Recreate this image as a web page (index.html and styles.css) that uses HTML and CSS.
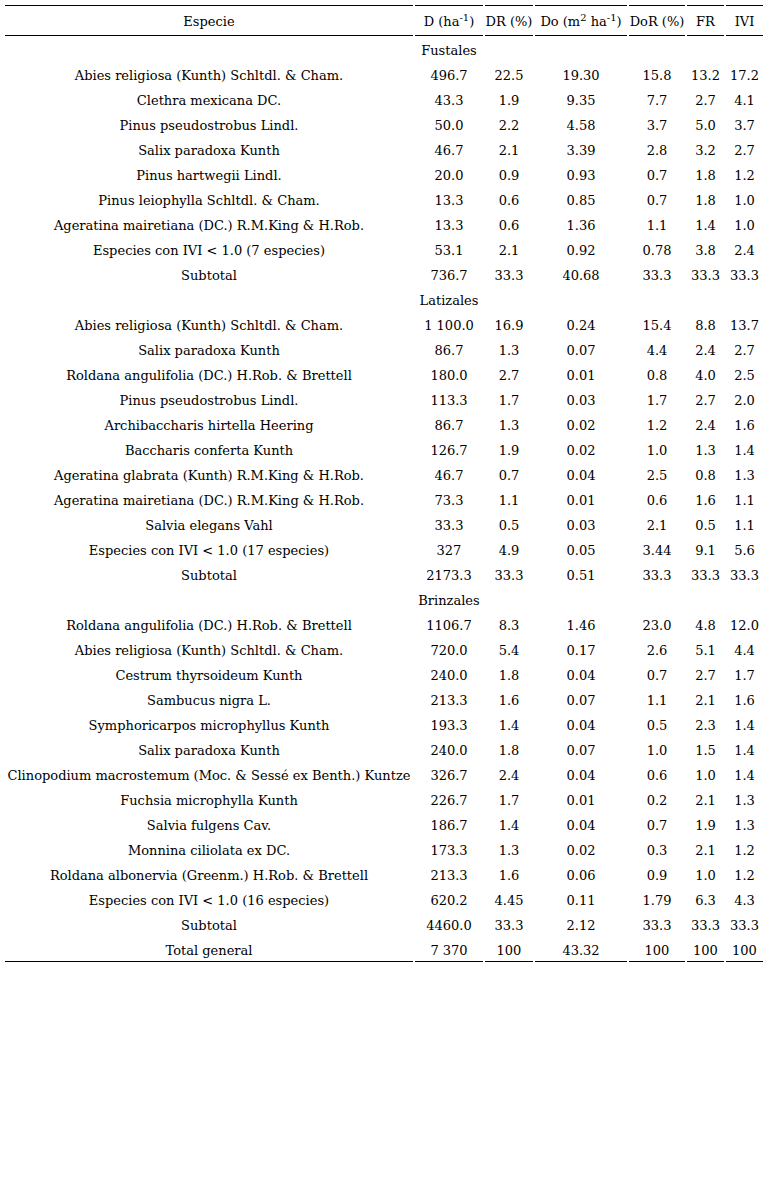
FILE: index.html
```html
<!DOCTYPE html>
<html lang="es">
<head>
<meta charset="utf-8">
<title>Tabla</title>
<link rel="stylesheet" href="styles.css">
</head>
<body>
<table class="tbl">
<colgroup>
<col class="c-sp"><col class="c-d"><col class="c-dr"><col class="c-do"><col class="c-dor"><col class="c-fr"><col class="c-ivi">
</colgroup>
<thead>
<tr class="head">
<th>Especie</th>
<th>D (ha<sup>-1</sup>)</th>
<th>DR (%)</th>
<th>Do (m<sup>2</sup> ha<sup>-1</sup>)</th>
<th>DoR (%)</th>
<th>FR</th>
<th>IVI</th>
</tr>
</thead>
<tbody>
<tr><td></td><td class="grp">Fustales</td><td></td><td></td><td></td><td></td><td></td></tr>
<tr><td>Abies religiosa (Kunth) Schltdl. &amp; Cham.</td><td>496.7</td><td>22.5</td><td>19.30</td><td>15.8</td><td>13.2</td><td>17.2</td></tr>
<tr><td>Clethra mexicana DC.</td><td>43.3</td><td>1.9</td><td>9.35</td><td>7.7</td><td>2.7</td><td>4.1</td></tr>
<tr><td>Pinus pseudostrobus Lindl.</td><td>50.0</td><td>2.2</td><td>4.58</td><td>3.7</td><td>5.0</td><td>3.7</td></tr>
<tr><td>Salix paradoxa Kunth</td><td>46.7</td><td>2.1</td><td>3.39</td><td>2.8</td><td>3.2</td><td>2.7</td></tr>
<tr><td>Pinus hartwegii Lindl.</td><td>20.0</td><td>0.9</td><td>0.93</td><td>0.7</td><td>1.8</td><td>1.2</td></tr>
<tr><td>Pinus leiophylla Schltdl. &amp; Cham.</td><td>13.3</td><td>0.6</td><td>0.85</td><td>0.7</td><td>1.8</td><td>1.0</td></tr>
<tr><td>Ageratina mairetiana (DC.) R.M.King &amp; H.Rob.</td><td>13.3</td><td>0.6</td><td>1.36</td><td>1.1</td><td>1.4</td><td>1.0</td></tr>
<tr><td>Especies con IVI &lt; 1.0 (7 especies)</td><td>53.1</td><td>2.1</td><td>0.92</td><td>0.78</td><td>3.8</td><td>2.4</td></tr>
<tr><td>Subtotal</td><td>736.7</td><td>33.3</td><td>40.68</td><td>33.3</td><td>33.3</td><td>33.3</td></tr>
<tr><td></td><td class="grp">Latizales</td><td></td><td></td><td></td><td></td><td></td></tr>
<tr><td>Abies religiosa (Kunth) Schltdl. &amp; Cham.</td><td>1 100.0</td><td>16.9</td><td>0.24</td><td>15.4</td><td>8.8</td><td>13.7</td></tr>
<tr><td>Salix paradoxa Kunth</td><td>86.7</td><td>1.3</td><td>0.07</td><td>4.4</td><td>2.4</td><td>2.7</td></tr>
<tr><td>Roldana angulifolia (DC.) H.Rob. &amp; Brettell</td><td>180.0</td><td>2.7</td><td>0.01</td><td>0.8</td><td>4.0</td><td>2.5</td></tr>
<tr><td>Pinus pseudostrobus Lindl.</td><td>113.3</td><td>1.7</td><td>0.03</td><td>1.7</td><td>2.7</td><td>2.0</td></tr>
<tr><td>Archibaccharis hirtella Heering</td><td>86.7</td><td>1.3</td><td>0.02</td><td>1.2</td><td>2.4</td><td>1.6</td></tr>
<tr><td>Baccharis conferta Kunth</td><td>126.7</td><td>1.9</td><td>0.02</td><td>1.0</td><td>1.3</td><td>1.4</td></tr>
<tr><td>Ageratina glabrata (Kunth) R.M.King &amp; H.Rob.</td><td>46.7</td><td>0.7</td><td>0.04</td><td>2.5</td><td>0.8</td><td>1.3</td></tr>
<tr><td>Ageratina mairetiana (DC.) R.M.King &amp; H.Rob.</td><td>73.3</td><td>1.1</td><td>0.01</td><td>0.6</td><td>1.6</td><td>1.1</td></tr>
<tr><td>Salvia elegans Vahl</td><td>33.3</td><td>0.5</td><td>0.03</td><td>2.1</td><td>0.5</td><td>1.1</td></tr>
<tr><td>Especies con IVI &lt; 1.0 (17 especies)</td><td>327</td><td>4.9</td><td>0.05</td><td>3.44</td><td>9.1</td><td>5.6</td></tr>
<tr><td>Subtotal</td><td>2173.3</td><td>33.3</td><td>0.51</td><td>33.3</td><td>33.3</td><td>33.3</td></tr>
<tr><td></td><td class="grp">Brinzales</td><td></td><td></td><td></td><td></td><td></td></tr>
<tr><td>Roldana angulifolia (DC.) H.Rob. &amp; Brettell</td><td>1106.7</td><td>8.3</td><td>1.46</td><td>23.0</td><td>4.8</td><td>12.0</td></tr>
<tr><td>Abies religiosa (Kunth) Schltdl. &amp; Cham.</td><td>720.0</td><td>5.4</td><td>0.17</td><td>2.6</td><td>5.1</td><td>4.4</td></tr>
<tr><td>Cestrum thyrsoideum Kunth</td><td>240.0</td><td>1.8</td><td>0.04</td><td>0.7</td><td>2.7</td><td>1.7</td></tr>
<tr><td>Sambucus nigra L.</td><td>213.3</td><td>1.6</td><td>0.07</td><td>1.1</td><td>2.1</td><td>1.6</td></tr>
<tr><td>Symphoricarpos microphyllus Kunth</td><td>193.3</td><td>1.4</td><td>0.04</td><td>0.5</td><td>2.3</td><td>1.4</td></tr>
<tr><td>Salix paradoxa Kunth</td><td>240.0</td><td>1.8</td><td>0.07</td><td>1.0</td><td>1.5</td><td>1.4</td></tr>
<tr><td>Clinopodium macrostemum (Moc. &amp; Sessé ex Benth.) Kuntze</td><td>326.7</td><td>2.4</td><td>0.04</td><td>0.6</td><td>1.0</td><td>1.4</td></tr>
<tr><td>Fuchsia microphylla Kunth</td><td>226.7</td><td>1.7</td><td>0.01</td><td>0.2</td><td>2.1</td><td>1.3</td></tr>
<tr><td>Salvia fulgens Cav.</td><td>186.7</td><td>1.4</td><td>0.04</td><td>0.7</td><td>1.9</td><td>1.3</td></tr>
<tr><td>Monnina ciliolata ex DC.</td><td>173.3</td><td>1.3</td><td>0.02</td><td>0.3</td><td>2.1</td><td>1.2</td></tr>
<tr><td>Roldana albonervia (Greenm.) H.Rob. &amp; Brettell</td><td>213.3</td><td>1.6</td><td>0.06</td><td>0.9</td><td>1.0</td><td>1.2</td></tr>
<tr><td>Especies con IVI &lt; 1.0 (16 especies)</td><td>620.2</td><td>4.45</td><td>0.11</td><td>1.79</td><td>6.3</td><td>4.3</td></tr>
<tr><td>Subtotal</td><td>4460.0</td><td>33.3</td><td>2.12</td><td>33.3</td><td>33.3</td><td>33.3</td></tr>
<tr class="total"><td>Total general</td><td>7 370</td><td>100</td><td>43.32</td><td>100</td><td>100</td><td>100</td></tr>
</tbody>
</table>
</body>
</html>
```

FILE: styles.css
```css
html, body {
  margin: 0;
  padding: 0;
  background: #ffffff;
}
body {
  padding: 3px;
  font-family: "DejaVu Serif", "Liberation Serif", serif;
  font-size: 13px;
  color: #000000;
}
.tbl {
  table-layout: fixed;
  width: 762px;
  border-collapse: separate;
  border-spacing: 2px;
}
.c-sp { width: 408px; }
.c-d { width: 68px; }
.c-dr { width: 48px; }
.c-do { width: 92px; }
.c-dor { width: 56px; }
.c-fr { width: 37px; }
.c-ivi { width: 37px; }
.tbl th, .tbl td {
  padding: 1px 0 0 0;
  height: 22px;
  line-height: 15px;
  text-align: center;
  vertical-align: middle;
  white-space: nowrap;
  font-weight: normal;
  overflow: visible;
}
.head th {
  height: 28px;
  padding-top: 1px;
  border-top: 1px solid #000;
  border-bottom: 1px solid #000;
}
sup {
  font-size: 10px;
  line-height: 0;
}
.grp {
  text-align: center;
}
.total td {
  border-bottom: 1px solid #000;
}
```
